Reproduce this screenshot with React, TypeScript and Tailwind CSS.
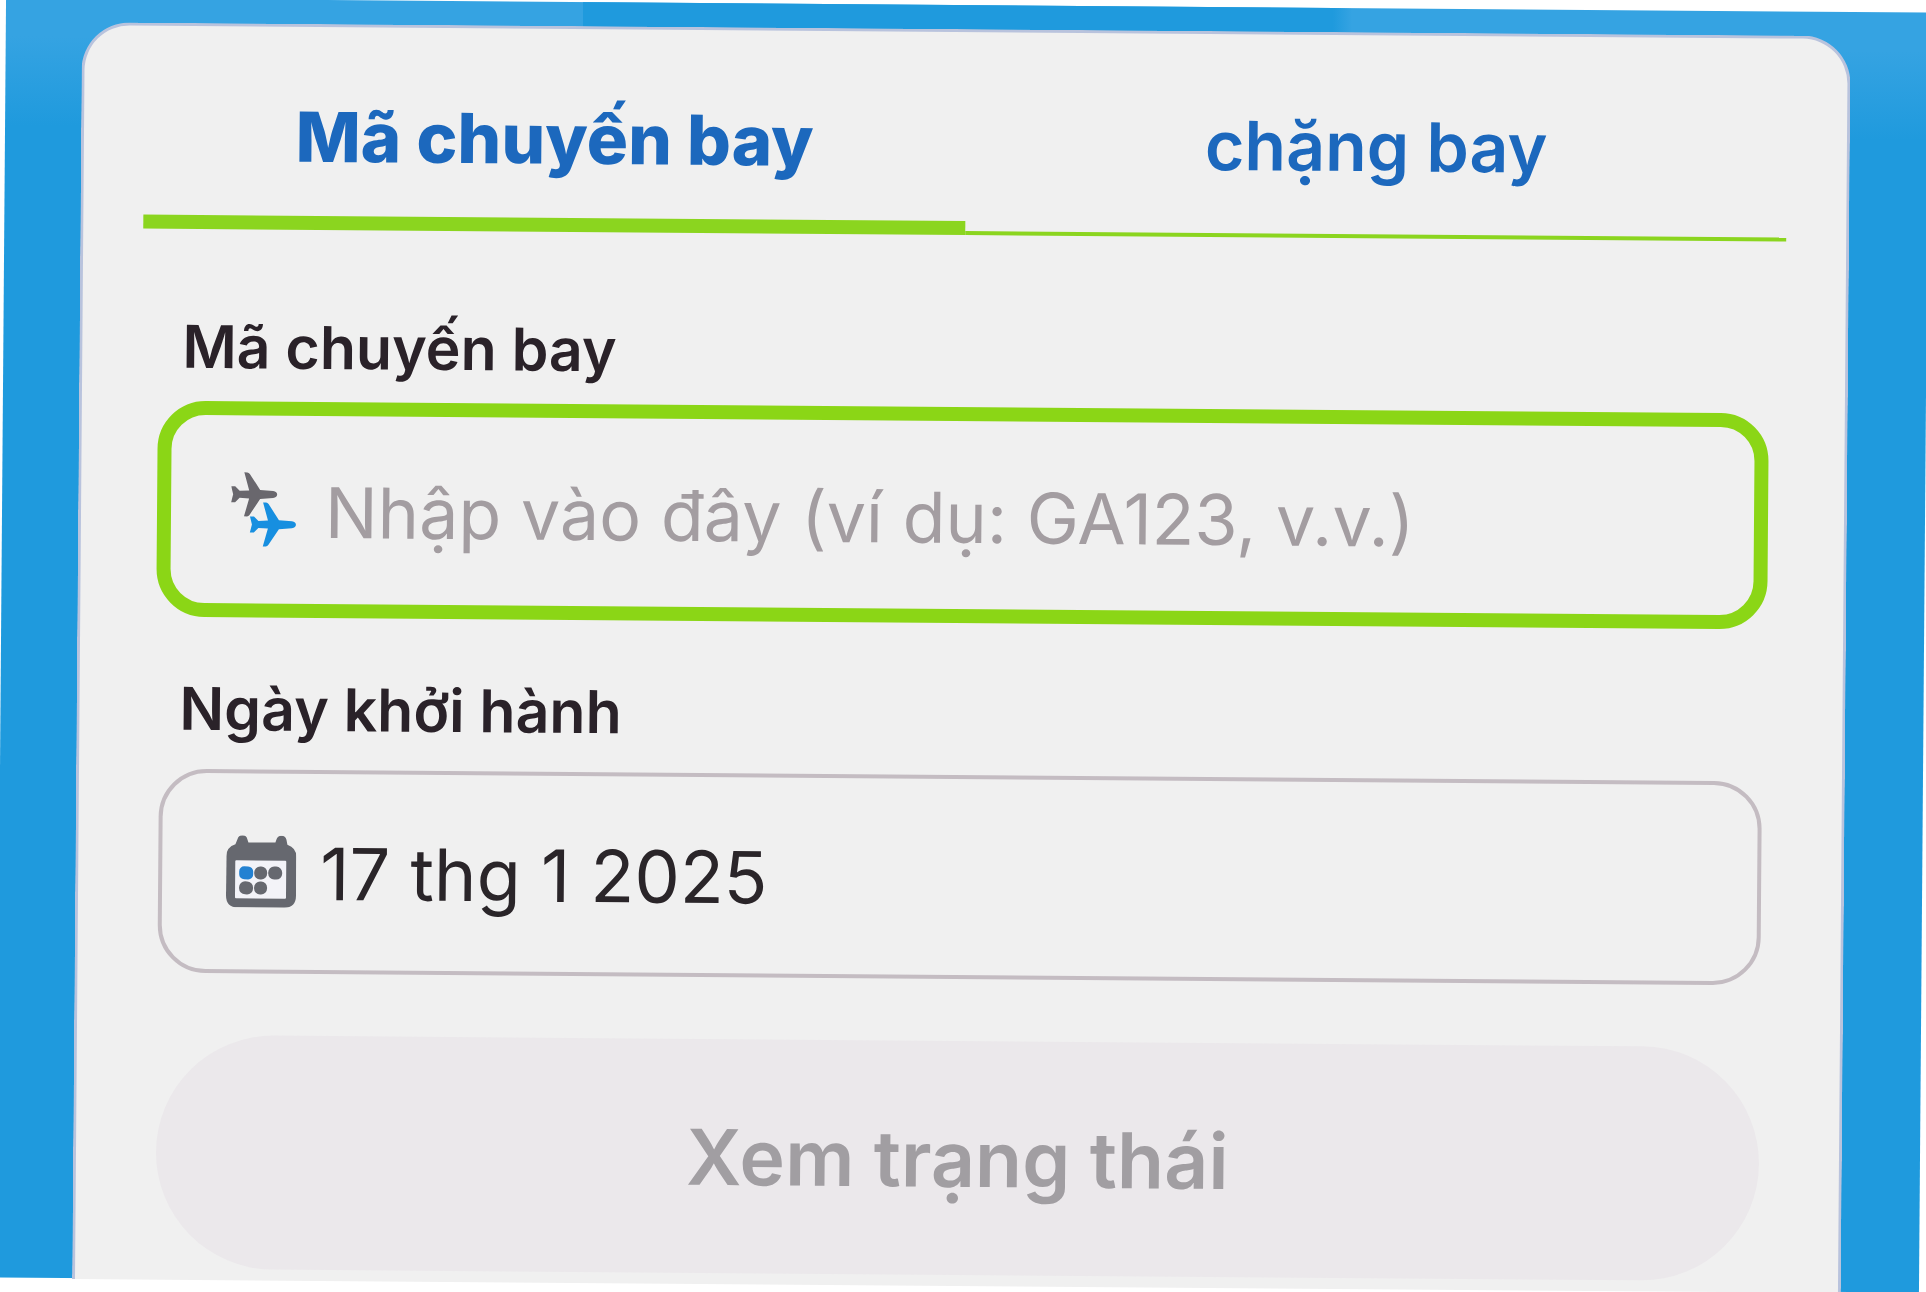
import type { ReactNode } from "react";
import { cx } from "class-variance-authority";

// === Icons ==================================================================

const PLANE =
  "M-22-8h4l4.500 4.500L-4-4-9-22h3q1.500 0 2.500 1.500L7-4.500 20-3.500q4 .5 4 3.500t-4 3.500L7 4.500-3.500 20.500Q-4.500 22-6 22h-3L-4 4l-9.500-.5L-18 8h-4l2-8z";

const PlanesIcon: React.FC = () => (
  <svg viewBox="0 0 66 76" className="h-[76px] w-[66px] shrink-0" aria-hidden>
    <path d={PLANE} transform="translate(22 23)" fill="#69676d" />
    <path d={PLANE} transform="translate(41 53)" fill="#178fe0" />
  </svg>
);

const CalendarIcon: React.FC = () => (
  <svg viewBox="0 0 70 72" className="h-[72px] w-[70px] shrink-0" aria-hidden>
    <path
      d="M9 9l2-5q1-4 5-4t5 4l1 3h27l1-3q1-4 5-4t5 4l1 5q9 3 9 12v39q0 12-12 12H12Q0 72 0 60V21Q0 12 9 9z"
      fill="#66686f"
    />
    <rect x="9" y="25" width="51" height="38" rx="1" fill="#f3f3f8" />
    <rect x="13" y="31" width="14" height="13" rx="5" fill="#2381d2" />
    <rect x="28" y="31" width="13" height="13" rx="6" fill="#66686f" />
    <rect x="42" y="31" width="14" height="13" rx="6" fill="#66686f" />
    <rect x="13" y="46" width="14" height="13" rx="6" fill="#66686f" />
    <rect x="28" y="46" width="13" height="13" rx="6" fill="#66686f" />
  </svg>
);

// === Tabs ===================================================================

const Tab: React.FC<{ label: string; active?: boolean }> = ({
  label,
  active,
}) => (
  <button
    type="button"
    role="tab"
    aria-selected={!!active}
    className={cx(
      "h-[203px] flex-1 border-[#8bd51f] pt-8 text-[#1c68bd]",
      active
        ? "border-b-[14px] text-[69px] font-extrabold"
        : "border-b-4 pb-2.5 text-[68px] font-semibold"
    )}
  >
    {label}
  </button>
);

// === Fields =================================================================

interface FieldProps {
  id: string;
  label: string;
  focused?: boolean;
  icon: ReactNode;
  value?: string;
  placeholder?: string;
}

const Field: React.FC<FieldProps> = ({ id, label, focused, icon, ...rest }) => (
  <div className="flex flex-col">
    <label
      htmlFor={id}
      className="px-5 text-[59px] leading-[72px] font-semibold text-[#2a2229]"
    >
      {label}
    </label>
    <div
      className={cx(
        "flex items-center rounded-[48px]",
        focused
          ? "-mx-1 mt-[18px] h-[216px] gap-7 border-[14px] border-[#8bd616] px-[60px] text-[70px]"
          : "mt-6 h-[204px] gap-6 border-4 border-[#c4bcc2] px-[64px] text-[72px]"
      )}
    >
      {icon}
      <input
        id={id}
        type="text"
        readOnly
        className="min-w-0 flex-1 bg-transparent pt-1 text-[#2a2529] outline-none placeholder:text-[#a39da1]"
        {...rest}
      />
    </div>
  </div>
);

export default function App() {
  return (
    <div className="flex min-h-screen flex-col overflow-hidden bg-white pt-[5px] pr-0.5 pb-[7px] pl-px font-['Inter',sans-serif]">
      <div className="flex flex-1 rotate-[0.45deg] flex-col bg-[linear-gradient(to_right,transparent_30%,#1f9add_30%,#1f9add_69%,transparent_70%),linear-gradient(to_bottom,#35a3e2_3%,#1f9add_10%)] pt-6 pr-[78px] pl-[76px]">
        <main className="-mb-px flex-1 rounded-t-[48px] border-[3px] border-b-0 border-[#b9c3dd] bg-[#f0f0f0] px-[60px]">
          <div role="tablist" className="flex items-end">
            <Tab label="Mã chuyến bay" active />
            <Tab label="chặng bay" />
          </div>
          <form className="flex flex-col px-5 pt-[82px]">
            <Field
              id="flight-code"
              label="Mã chuyến bay"
              focused
              icon={<PlanesIcon />}
              placeholder="Nhập vào đây (ví dụ: GA123, v.v.)"
            />
            <div className="mt-14">
              <Field
                id="departure-date"
                label="Ngày khởi hành"
                icon={<CalendarIcon />}
                value="17 thg 1 2025"
              />
            </div>
            <button
              type="button"
              disabled
              className="mt-[62px] h-[234px] rounded-full bg-[#ebe8eb] pt-1 text-[77px] font-semibold text-[#a19ea2]"
            >
              Xem trạng thái
            </button>
          </form>
        </main>
      </div>
    </div>
  );
}
